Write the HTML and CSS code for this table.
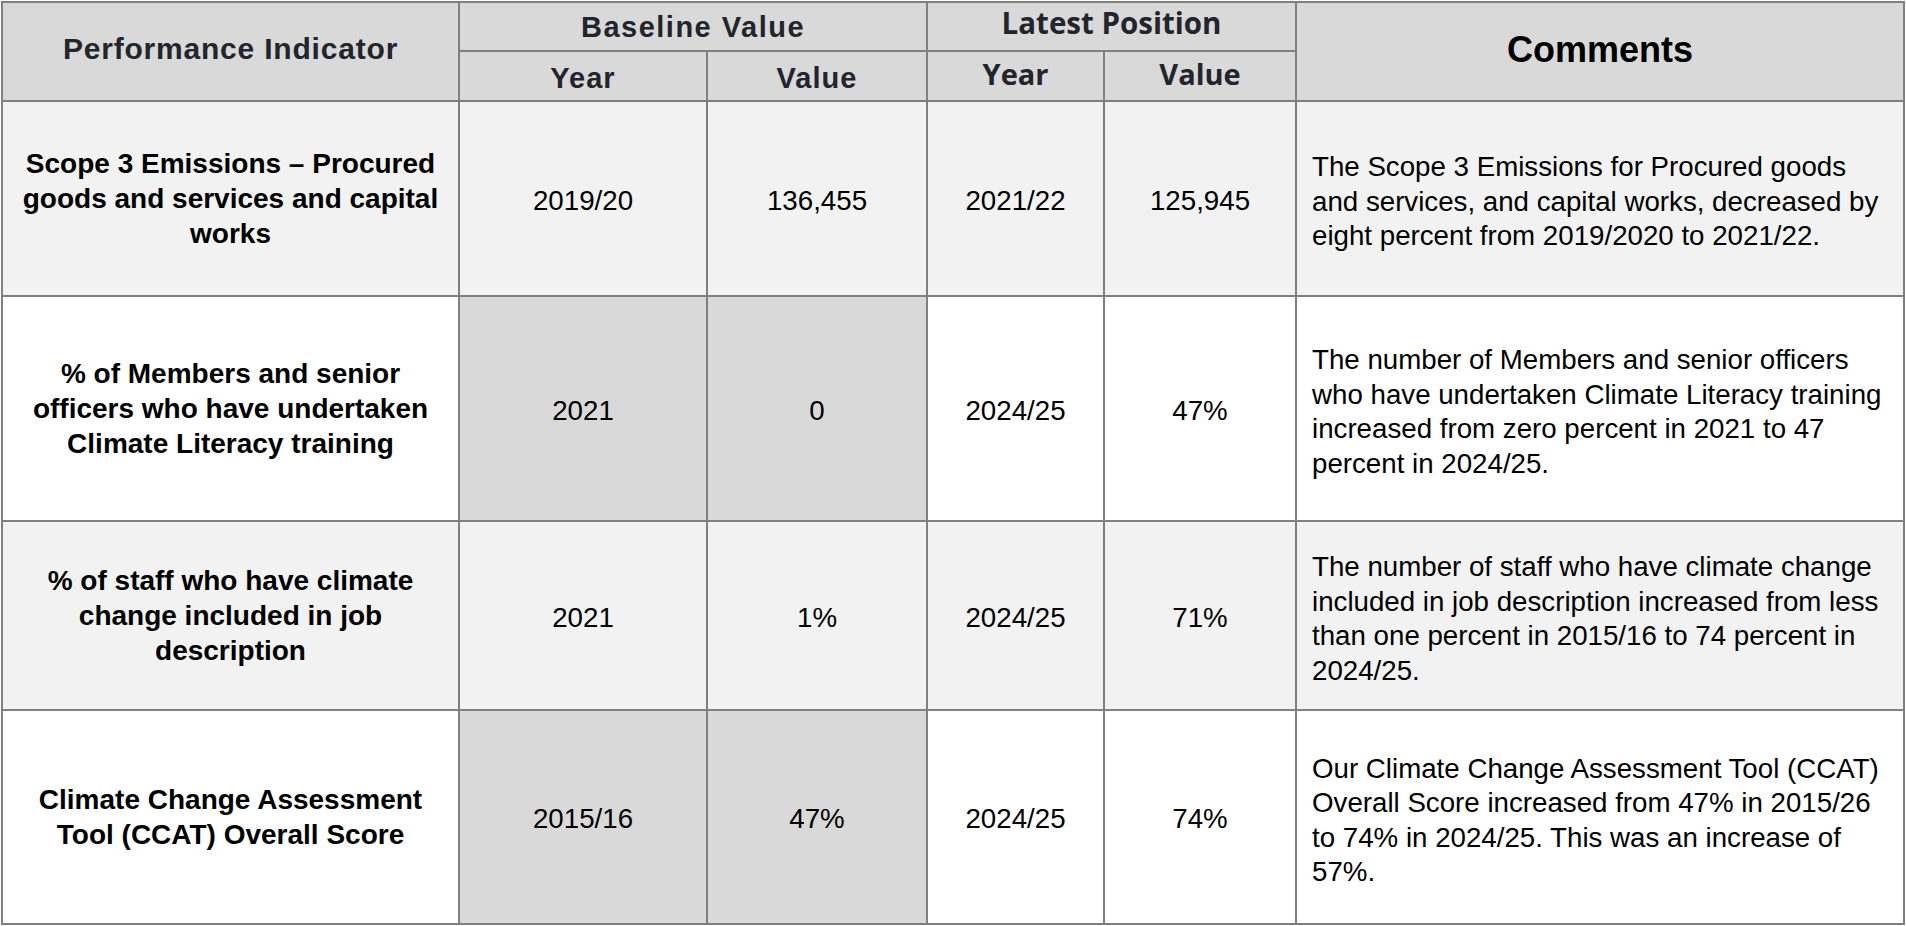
FILE: index.html
```
<!DOCTYPE html>
<html lang="en">
<head>
<meta charset="utf-8">
<title>Performance Indicators</title>
<link rel="stylesheet" href="styles.css">
</head>
<body>
<table class="kpi">
  <colgroup>
    <col class="c-ind">
    <col class="c-by">
    <col class="c-bv">
    <col class="c-ly">
    <col class="c-lv">
    <col class="c-cm">
  </colgroup>
  <thead>
    <tr class="hr1">
      <th rowspan="2" class="h-pi">Performance Indicator</th>
      <th colspan="2" class="h-base">Baseline Value</th>
      <th colspan="2" class="h-latest">Latest Position</th>
      <th rowspan="2" class="h-comments">Comments</th>
    </tr>
    <tr class="hr2">
      <th class="h-sub-base">Year</th>
      <th class="h-sub-base">Value</th>
      <th class="h-sub-latest">Year</th>
      <th class="h-sub-latest">Value</th>
    </tr>
  </thead>
  <tbody>
    <tr class="row r1 alt">
      <td class="ind">Scope 3 Emissions – Procured<br>goods and services and capital<br>works</td>
      <td class="num">2019/20</td>
      <td class="num">136,455</td>
      <td class="num">2021/22</td>
      <td class="num">125,945</td>
      <td class="cmt">The Scope 3 Emissions for Procured goods<br>and services, and capital works, decreased by<br>eight percent from 2019/2020 to 2021/22.</td>
    </tr>
    <tr class="row r2">
      <td class="ind">% of Members and senior<br>officers who have undertaken<br>Climate Literacy training</td>
      <td class="num shade">2021</td>
      <td class="num shade">0</td>
      <td class="num">2024/25</td>
      <td class="num">47%</td>
      <td class="cmt">The number of Members and senior officers<br>who have undertaken Climate Literacy training<br>increased from zero percent in 2021 to 47<br>percent in 2024/25.</td>
    </tr>
    <tr class="row r3 alt">
      <td class="ind">% of staff who have climate<br>change included in job<br>description</td>
      <td class="num">2021</td>
      <td class="num">1%</td>
      <td class="num">2024/25</td>
      <td class="num">71%</td>
      <td class="cmt">The number of staff who have climate change<br>included in job description increased from less<br>than one percent in 2015/16 to 74 percent in<br>2024/25.</td>
    </tr>
    <tr class="row r4">
      <td class="ind">Climate Change Assessment<br>Tool (CCAT) Overall Score</td>
      <td class="num shade">2015/16</td>
      <td class="num shade">47%</td>
      <td class="num">2024/25</td>
      <td class="num">74%</td>
      <td class="cmt">Our Climate Change Assessment Tool (CCAT)<br>Overall Score increased from 47% in 2015/26<br>to 74% in 2024/25. This was an increase of<br>57%.</td>
    </tr>
  </tbody>
</table>
</body>
</html>
```
FILE: styles.css
```
html, body {
  margin: 0;
  padding: 0;
  background: #ffffff;
}

body {
  font-family: "Liberation Sans", Arial, sans-serif;
  color: #000;
}

.kpi {
  border-collapse: collapse;
  table-layout: fixed;
  width: 1904px;
  margin: 1px 0 0 1px;
}

.c-ind { width: 457px; }
.c-by  { width: 248px; }
.c-bv  { width: 220px; }
.c-ly  { width: 177px; }
.c-lv  { width: 192px; }
.c-cm  { width: 608px; }

.kpi th,
.kpi td {
  border: 2px solid #808080;
  padding: 0;
  vertical-align: middle;
  text-align: center;
}

.kpi th {
  background: #d9d9d9;
  color: #22252b;
  font-weight: bold;
}

.hr1 { height: 49px; }
.hr2 { height: 50px; }
.r1 { height: 195px; }
.r2 { height: 225px; }
.r3 { height: 189px; }
.r4 { height: 214px; }

.kpi .h-pi {
  font-size: 30px;
  letter-spacing: 0.8px;
  line-height: 34px;
  padding-bottom: 5px;
}

.kpi .h-base {
  font-size: 29px;
  letter-spacing: 1.5px;
  line-height: 33px;
  padding-top: 2px;
}

.kpi .h-sub-base {
  font-size: 29px;
  letter-spacing: 1px;
  line-height: 33px;
  padding-top: 4px;
}

.kpi .h-latest,
.kpi .h-sub-latest {
  font-family: "Open Sans", "Liberation Sans", sans-serif;
  font-size: 29.5px;
  line-height: 38px;
}

.kpi .h-latest {
  padding-bottom: 7px;
}

.kpi .h-sub-latest {
  font-size: 29px;
  padding-bottom: 5px;
}

.kpi .h-comments {
  font-size: 36px;
  line-height: 41px;
  color: #000;
  padding-bottom: 5px;
}

.row td { background: #ffffff; }
.row.alt td { background: #f2f2f2; }
.row td.shade { background: #d9d9d9; }

.kpi .ind {
  font-weight: bold;
  font-size: 28px;
  line-height: 35px;
}

.kpi .num {
  font-size: 27.7px;
  line-height: 34px;
  padding-top: 4px;
}

.kpi .cmt {
  text-align: left;
  font-size: 27.7px;
  line-height: 34.5px;
  padding: 7px 0 0 15px;
  white-space: nowrap;
}
```
